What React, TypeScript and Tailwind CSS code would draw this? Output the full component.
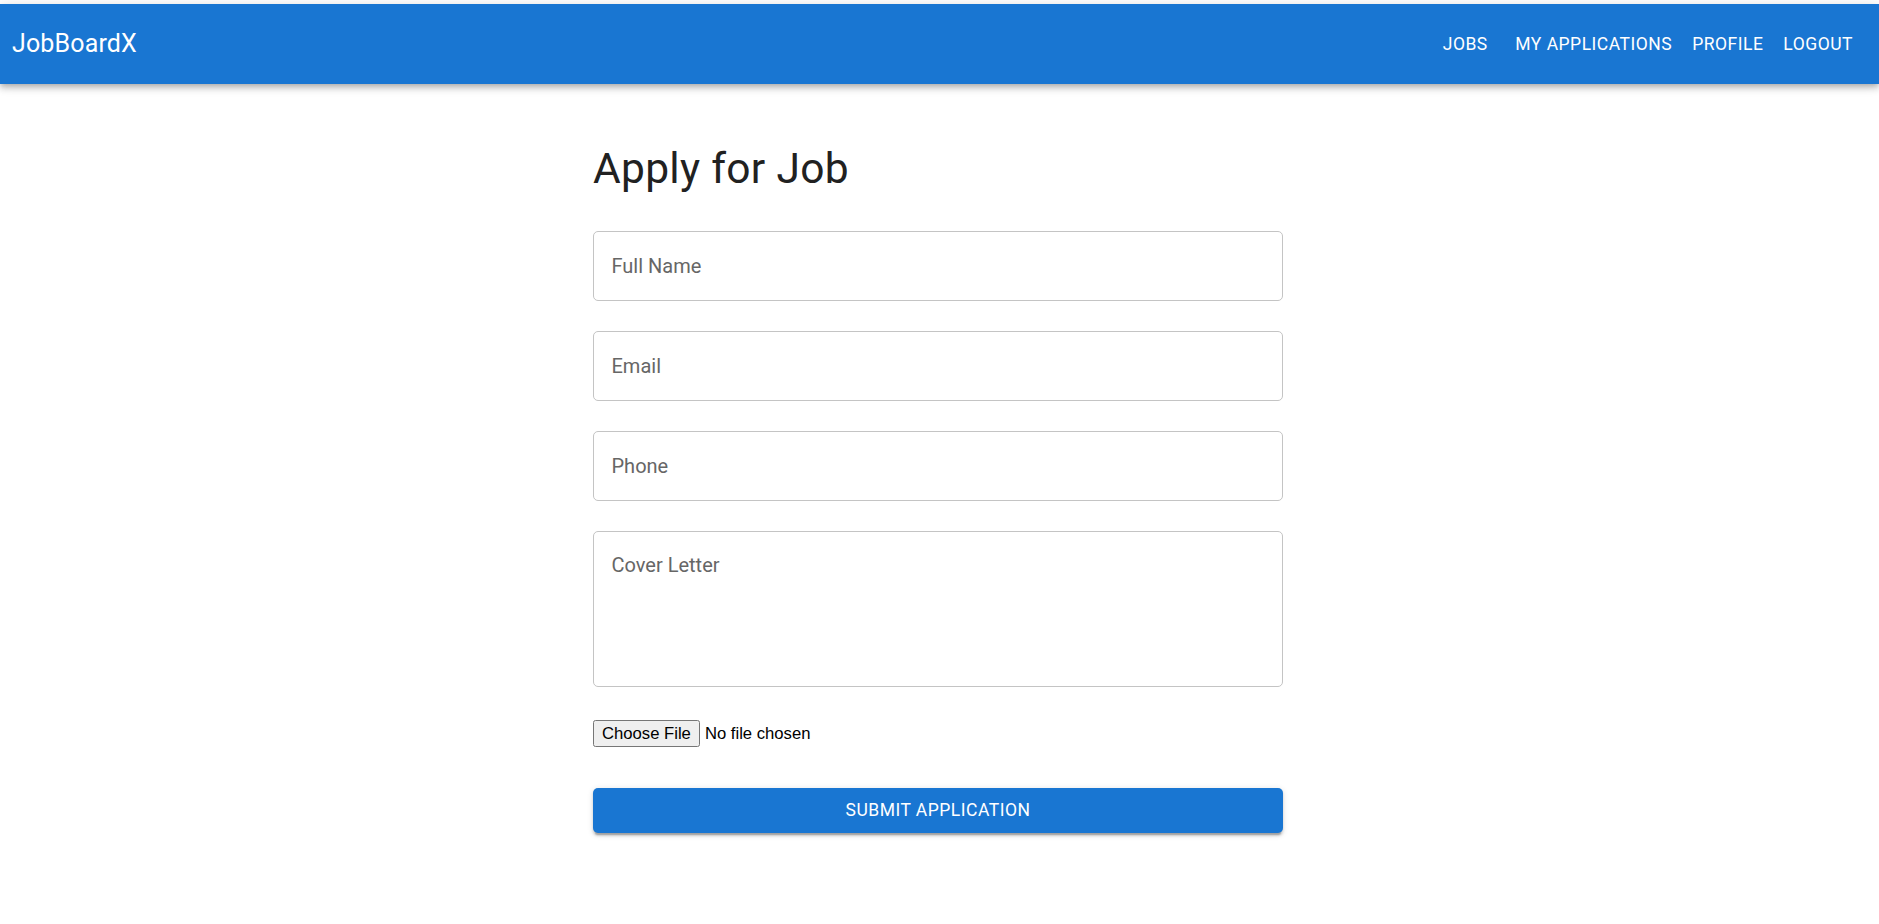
import { useState } from "react";

const NAV_LINKS = ["Jobs", "My Applications", "Profile", "Logout"];

const FIELDS = [
  { name: "fullName", label: "Full Name", type: "text" },
  { name: "email", label: "Email", type: "email" },
  { name: "phone", label: "Phone", type: "tel" },
];

const fieldClass =
  "w-full rounded-[5px] border border-[#c4c4c4] bg-white px-[17.5px] text-[20px] text-[#212121] outline-none placeholder:text-[#666666] hover:border-[#212121] focus:border-2 focus:border-[#1976d2]";

export default function App() {
  const [form, setForm] = useState({
    fullName: "",
    email: "",
    phone: "",
    coverLetter: "",
  });

  const update = (key: string, value: string) =>
    setForm((prev) => ({ ...prev, [key]: value }));

  return (
    <div className="min-h-screen bg-white font-['Roboto','Helvetica','Arial',sans-serif] text-[#212121]">
      <div className="h-1 bg-white" />
      <header className="flex h-[80px] items-center justify-between bg-[#1976d2] pl-3 pr-4 text-white shadow-[0_2.5px_5px_-1.25px_rgba(0,0,0,0.2),0_5px_6px_0_rgba(0,0,0,0.14),0_1.25px_12.5px_0_rgba(0,0,0,0.12)]">
        <div className="text-[25px] leading-[1.6] font-normal tracking-[0.15px]">
          JobBoardX
        </div>
        <nav className="flex items-center">
          {NAV_LINKS.map((link) => (
            <button
              key={link}
              type="button"
              className="min-w-[80px] rounded-[5px] px-[10px] py-[7.5px] text-[17.5px] leading-[1.75] font-normal tracking-[0.5px] text-white uppercase hover:bg-white/10"
            >
              {link}
            </button>
          ))}
        </nav>
      </header>

      <div className="pr-[3px]">
        <main className="mx-auto w-[690px] pt-[58.5px] pb-16">
          <h1 className="mb-[16px] text-[42.5px] leading-[1.235] font-normal tracking-[0.3px] text-[#212121]">
            Apply for Job
          </h1>

          <form
            className="flex flex-col"
            onSubmit={(e) => e.preventDefault()}
          >
            {FIELDS.map((field) => (
              <div key={field.name} className="mt-[20px] mb-[10px]">
                <input
                  type={field.type}
                  placeholder={field.label}
                  value={form[field.name as keyof typeof form]}
                  onChange={(e) => update(field.name, e.target.value)}
                  className={`${fieldClass} h-[70px]`}
                />
              </div>
            ))}

            <div className="mt-[20px] mb-[10px]">
              <textarea
                placeholder="Cover Letter"
                value={form.coverLetter}
                onChange={(e) => update("coverLetter", e.target.value)}
                className={`${fieldClass} block h-[156px] resize-none pt-[19.5px] leading-[28.75px]`}
              />
            </div>

            <div className="mt-[23px]">
              <input
                type="file"
                className="font-['Liberation_Sans',Arial,sans-serif] text-[16.67px] text-black file:mr-[5px] file:h-[27px] file:rounded-[2.5px] file:border file:border-[#767676] file:bg-[#efefef] file:px-[8px] file:text-black"
              />
            </div>

            <button
              type="submit"
              className="mt-[41px] h-[45px] w-full rounded-[5px] bg-[#1976d2] text-[17.5px] leading-[1.75] font-normal tracking-[0.5px] text-white uppercase shadow-[0_3.75px_1.25px_-2.5px_rgba(0,0,0,0.2),0_2.5px_2.5px_0_rgba(0,0,0,0.14),0_1.25px_6.25px_0_rgba(0,0,0,0.12)] hover:bg-[#1565c0]"
            >
              Submit Application
            </button>
          </form>
        </main>
      </div>
    </div>
  );
}
